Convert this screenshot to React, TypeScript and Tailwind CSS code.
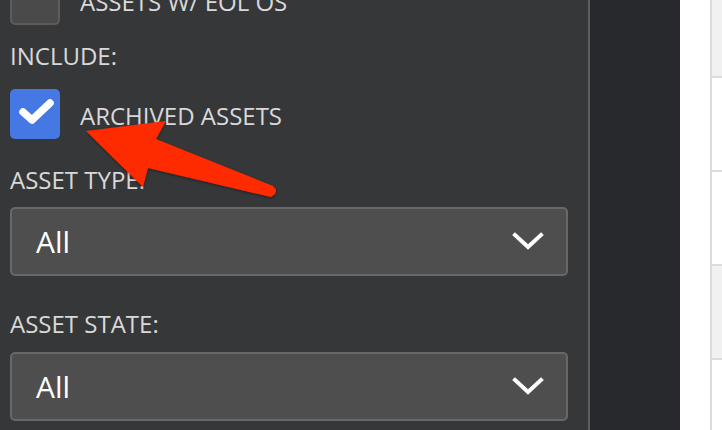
import React from "react";

const font = { fontFamily: '"Open Sans", "Noto Sans", sans-serif' };

function Chevron() {
  return (
    <svg width="32" height="20" viewBox="0 0 32 20" className="shrink-0">
      <polyline
        points="3,3 16,15 29,3"
        fill="none"
        stroke="#ffffff"
        strokeWidth="4"
        strokeLinecap="square"
        strokeLinejoin="miter"
      />
    </svg>
  );
}

function Select() {
  return (
    <div className="flex h-[69px] w-[558px] items-center justify-between rounded-[5px] border-2 border-[#686868] bg-[#4e4e4e] pl-[24px] pr-[22px]">
      <span className="text-[30px] leading-[36px] text-white">All</span>
      <Chevron />
    </div>
  );
}

export default function App() {
  return (
    <div
      className="relative flex h-[430px] w-[722px] overflow-hidden bg-white"
      style={font}
    >
      {/* left filter panel */}
      <div className="flex h-full w-[590px] shrink-0 flex-col border-r-2 border-[#5e5e5f] bg-[#363739] pl-[10px]">
        <div className="mt-[-25px] flex h-[50px] items-center gap-[20px]">
          <div className="h-[50px] w-[50px] rounded-[5px] border-2 border-[#5c5c5c] bg-[#4a4a4a]" />
          <span className="pt-[4px] text-[24px] leading-[30px] text-[#d9d9d9]">
            ASSETS W/ EOL OS
          </span>
        </div>

        <div className="mt-[16px] text-[24px] leading-[30px] text-[#d9d9d9]">
          INCLUDE:
        </div>

        <div className="mt-[18px] flex h-[50px] items-center gap-[20px]">
          <div className="flex h-[50px] w-[50px] items-center justify-center rounded-[5px] bg-[#4578e2]">
            <svg width="50" height="50" viewBox="0 0 50 50">
              <polyline
                points="13,23 22,31 40,14"
                fill="none"
                stroke="#ffffff"
                strokeWidth="7.5"
                strokeLinecap="round"
                strokeLinejoin="round"
              />
            </svg>
          </div>
          <span className="pt-[4px] text-[24px] leading-[30px] text-[#d9d9d9]">
            ARCHIVED ASSETS
          </span>
        </div>

        <div className="mt-[26px] text-[24px] leading-[30px] text-[#d9d9d9]">
          ASSET TYPE:
        </div>
        <div className="mt-[12px]">
          <Select />
        </div>

        <div className="mt-[33px] text-[24px] leading-[30px] text-[#d9d9d9]">
          ASSET STATE:
        </div>
        <div className="mt-[13px]">
          <Select />
        </div>
      </div>

      {/* dark strip */}
      <div className="h-full w-[90px] shrink-0 bg-[#28292d]" />

      {/* white area with table edge */}
      <div className="h-full w-[30px] shrink-0 bg-white" />
      <div className="flex h-full flex-1 flex-col border-l-2 border-[#dcdcdc]">
        <div className="h-[78px] shrink-0 border-b-2 border-[#dcdcdc] bg-[#f1f1f1]" />
        <div className="h-[94px] shrink-0 border-b-2 border-[#dcdcdc] bg-white" />
        <div className="h-[94px] shrink-0 border-b-2 border-[#dcdcdc] bg-white" />
        <div className="h-[94px] shrink-0 border-b-2 border-[#dcdcdc] bg-[#f1f1f1]" />
        <div className="flex-1 bg-white" />
      </div>

      {/* red annotation arrow */}
      <svg
        className="pointer-events-none absolute left-0 top-0"
        width="722"
        height="430"
        viewBox="0 0 722 430"
      >
        <defs>
          <filter id="sh" x="-10%" y="-10%" width="130%" height="130%">
            <feDropShadow dx="0" dy="1" stdDeviation="1.5" floodColor="#000" floodOpacity="0.45" />
          </filter>
        </defs>
        <path
          d="M86 131 L166 121 L156 139 L273 186 Q280 192 271 197 L148 168 L143 187 Z"
          fill="#fe2a03"
          filter="url(#sh)"
          strokeLinejoin="round"
        />
      </svg>
    </div>
  );
}
